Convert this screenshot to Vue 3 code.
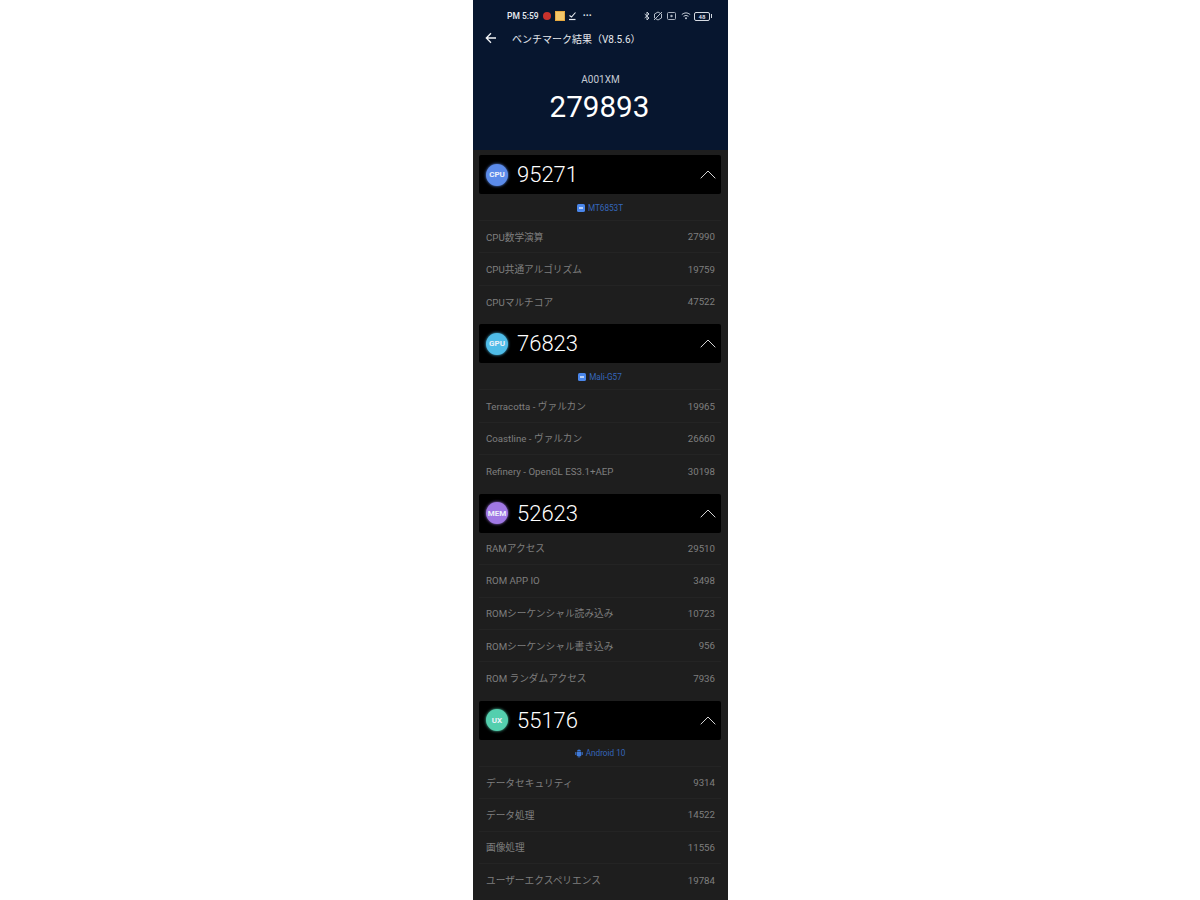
<template>
  <div class="page">
    <div class="phone">
      <div class="top">
        <div class="status">
          <span class="time">PM 5:59</span>
          <span class="dot-red"></span>
          <span class="note"></span>
          <svg class="ic-check" width="9" height="10" viewBox="0 0 9 10">
            <path d="M1.5 4.5 L3.5 6 L7.5 1.5" fill="none" stroke="#e8ecf2" stroke-width="1.1" />
            <path d="M1 8.5 H7.5" stroke="#e8ecf2" stroke-width="1.2" />
          </svg>
          <span class="more">···</span>
          <span class="spacer"></span>
          <div class="sys">
            <svg width="6" height="10" viewBox="0 0 6 10">
              <path d="M0.7 3 L5 7 L3 9 V1 L5 3 L0.7 7" fill="none" stroke="#c9d0da" stroke-width="1" />
            </svg>
            <svg width="10" height="10" viewBox="0 0 10 10">
              <path d="M5 1 L8.5 3 V7 L5 9 L1.5 7 V3 Z M1 9 L9 1" fill="none" stroke="#b4bcc8" stroke-width="1" />
            </svg>
            <svg width="9" height="8" viewBox="0 0 9 8">
              <rect x="0.5" y="0.5" width="8" height="7" rx="1" fill="none" stroke="#aab2bf" stroke-width="1" />
              <circle cx="4.5" cy="4" r="1.2" fill="#aab2bf" />
            </svg>
            <svg width="11" height="8" viewBox="0 0 11 8">
              <path d="M0.8 2.5 Q5 -0.8 9.2 2.5 M2.5 4.3 Q5 2.4 7.5 4.3" fill="none" stroke="#c2c9d4" stroke-width="1" />
              <circle cx="5" cy="6.3" r="1" fill="#c2c9d4" />
            </svg>
            <span class="battery"><i>48</i></span>
          </div>
        </div>
        <div class="nav">
          <svg width="12" height="12" viewBox="0 0 12 12">
            <path d="M11 6 H1.5 M6 1.3 L1.3 6 L6 10.7" fill="none" stroke="#f2f4f7" stroke-width="1.3" />
          </svg>
          <span class="title">ベンチマーク結果（V8.5.6）</span>
        </div>
        <div class="device">A001XM</div>
        <div class="total">279893</div>
      </div>

      <div class="content">
        <section v-for="s in sections" :key="s.key" class="sec">
          <div class="sec-head">
            <span class="badge" :style="{ background: s.color, boxShadow: '0 0 3px ' + s.color }">{{ s.key }}</span>
            <span class="score">{{ s.score }}</span>
            <svg class="chev" width="16" height="9" viewBox="0 0 16 9">
              <path d="M0.7 8.3 L8 1 L15.3 8.3" fill="none" stroke="#d4d4d4" stroke-width="1" />
            </svg>
          </div>
          <div v-if="s.chip" class="chip">
            <svg v-if="s.key === 'UX'" width="8" height="9" viewBox="0 0 8 9">
              <path d="M2 2.6 A2 2 0 0 1 6 2.6 Z M1.8 3.1 H6.2 V7 H5.2 V8.6 H4.4 V7 H3.6 V8.6 H2.8 V7 H1.8 Z" fill="#3f7bdc" />
              <rect x="0.3" y="3.1" width="1" height="3" rx="0.5" fill="#3f7bdc" />
              <rect x="6.7" y="3.1" width="1" height="3" rx="0.5" fill="#3f7bdc" />
            </svg>
            <svg v-else width="8" height="8" viewBox="0 0 8 8">
              <rect width="8" height="8" rx="1.6" fill="#4a86ea" />
              <rect x="2" y="3" width="4" height="2" fill="#b9d0f7" />
            </svg>
            <span>{{ s.chip }}</span>
          </div>
          <div v-for="r in s.rows" :key="r[0]" class="row">
            <span>{{ r[0] }}</span>
            <span>{{ r[1] }}</span>
          </div>
        </section>
      </div>
    </div>
  </div>
</template>

<script setup>
const sections = [
  {
    key: 'CPU',
    score: 95271,
    color: '#5b8bea',
    chip: 'MT6853T',
    rows: [
      ['CPU数学演算', 27990],
      ['CPU共通アルゴリズム', 19759],
      ['CPUマルチコア', 47522]
    ]
  },
  {
    key: 'GPU',
    score: 76823,
    color: '#4fbce8',
    chip: 'Mali-G57',
    rows: [
      ['Terracotta - ヴァルカン', 19965],
      ['Coastline - ヴァルカン', 26660],
      ['Refinery - OpenGL ES3.1+AEP', 30198]
    ]
  },
  {
    key: 'MEM',
    score: 52623,
    color: '#a078e4',
    rows: [
      ['RAMアクセス', 29510],
      ['ROM APP IO', 3498],
      ['ROMシーケンシャル読み込み', 10723],
      ['ROMシーケンシャル書き込み', 956],
      ['ROM ランダムアクセス', 7936]
    ]
  },
  {
    key: 'UX',
    score: 55176,
    color: '#54cfae',
    chip: 'Android 10',
    rows: [
      ['データセキュリティ', 9314],
      ['データ処理', 14522],
      ['画像処理', 11556],
      ['ユーザーエクスペリエンス', 19784]
    ]
  }
]
</script>

<style>
html,
body {
  background: #fff;
  overflow: hidden;
}
</style>

<style scoped>
.page {
  height: 900px;
  overflow: hidden;
  background: #fff;
  display: flex;
  justify-content: center;
  font-family: Roboto, "Noto Sans CJK JP", sans-serif;
}
.phone {
  width: 255px;
  margin-left: 1px;
  background: #1e1e1e;
  overflow: hidden;
}
.top {
  height: 150px;
  background: #07162f;
  color: #fff;
}
.status {
  height: 10px;
  padding: 11px 17px 0 34px;
  display: flex;
  align-items: center;
  gap: 4px;
}
.time {
  font-size: 8.5px;
  font-weight: 500;
  color: #e8ecf2;
}
.dot-red {
  width: 8px;
  height: 8px;
  border-radius: 50%;
  background: #c8322c;
}
.note {
  width: 10px;
  height: 10px;
  background: #f2c66a;
  border: 1px solid #e6a93f;
  box-sizing: border-box;
}
.ic-check {
  margin-left: -1px;
}
.more {
  font-size: 10px;
  line-height: 10px;
  font-weight: 700;
  color: #dfe3ea;
  margin-left: 2px;
}
.spacer {
  flex: 1;
}
.sys {
  display: flex;
  align-items: center;
}
.sys svg:nth-child(2) {
  margin-left: 3px;
}
.sys svg:nth-child(3) {
  margin-left: 4px;
}
.sys svg:nth-child(4) {
  margin-left: 5px;
}
.battery {
  position: relative;
  width: 14px;
  height: 7px;
  border: 1px solid #d6dbe3;
  border-radius: 2px;
  margin-left: 2px;
  margin-right: 1px;
  display: flex;
  align-items: center;
  justify-content: center;
}
.battery::after {
  content: "";
  position: absolute;
  right: -3px;
  top: 1.5px;
  width: 1px;
  height: 4px;
  background: #d6dbe3;
}
.battery i {
  font-style: normal;
  font-size: 6px;
  font-weight: 700;
  color: #d6dbe3;
}
.nav {
  display: flex;
  align-items: center;
  padding: 7px 0 0 12px;
  height: 20px;
}
.title {
  font-size: 10px;
  margin-left: 15px;
  color: #e6e9ee;
  white-space: nowrap;
}
.device {
  margin-top: 25px;
  text-align: center;
  font-size: 10px;
  line-height: 14px;
  color: #c4cad4;
}
.total {
  margin-top: 1px;
  padding-right: 2px;
  text-align: center;
  font-size: 29.6px;
  line-height: 38px;
  color: #fff;
}
.content {
  padding: 5px 7px 0 6px;
}
.sec {
  margin-bottom: 6.2px;
}
.sec-head {
  height: 39px;
  background: #000;
  border-radius: 2px;
  display: flex;
  align-items: center;
  padding: 0 5px 0 7px;
}
.badge {
  width: 22px;
  height: 22px;
  border-radius: 50%;
  color: #eef2fa;
  font-size: 8px;
  font-weight: 700;
  display: flex;
  align-items: center;
  justify-content: center;
}
.score {
  margin-left: 9px;
  font-size: 22px;
  font-weight: 300;
  color: #fff;
}
.chev {
  margin-left: auto;
}
.chip {
  height: 25px;
  padding-top: 1px;
  display: flex;
  align-items: center;
  justify-content: center;
  gap: 3px;
  font-size: 8.2px;
  color: #3566bb;
  border-bottom: 1px solid #242424;
}
.row {
  height: 31.4px;
  display: flex;
  align-items: center;
  justify-content: space-between;
  padding: 0 6px 0 7px;
  font-size: 9.7px;
  color: #7f7f7f;
  border-bottom: 1px solid #242424;
}
.row:last-child {
  border-bottom: 0;
  height: 32.4px;
}
</style>
